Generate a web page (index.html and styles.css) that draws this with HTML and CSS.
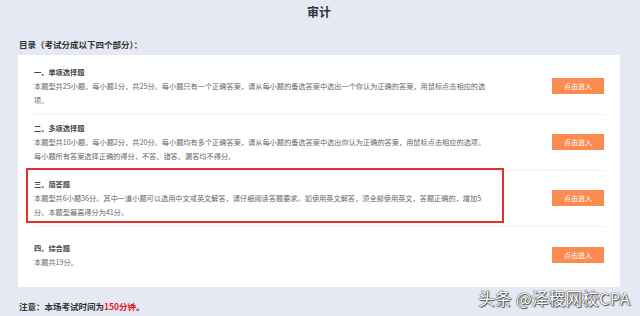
FILE: index.html
```html
<!DOCTYPE html>
<html lang="zh-CN">

<head>
    <meta charset="UTF-8" />
    <meta name="viewport" content="width=device-width, initial-scale=1.0" />
    <title>审计</title>
    <link rel="stylesheet" href="styles.css">
</head>

<body>

    <section class="page">
        <h1 class="title">审计</h1>
        <h2 class="menu">目录（考试分成以下四个部分）：</h2>

        <div class="panel">
            <div class="row">
                <div class="info">
                    <p class="name">一、单项选择题</p>
                    <p class="desc">本题型共25小题，每小题1分，共25分。每小题只有一个正确答案，请从每小题的备选答案中选出一个你认为正确的答案，用鼠标点击相应的选项。</p>
                </div>
                <button class="btn">点击进入</button>
            </div>
            <div class="row">
                <div class="info">
                    <p class="name">二、多项选择题</p>
                    <p class="desc">本题型共10小题，每小题2分，共20分。每小题均有多个正确答案，请从每小题的备选答案中选出你认为正确的答案，用鼠标点击相应的选项。<br>每小题所有答案选择正确的得分，不答、错答、漏答均不得分。</p>
                </div>
                <button class="btn">点击进入</button>
            </div>
            <div class="row">
                <div class="info mark">
                    <p class="name">三、简答题</p>
                    <p class="desc">本题型共6小题36分。其中一道小题可以选用中文或英文解答，请仔细阅读答题要求。如使用英文解答，须全部使用英文，答题正确的，增加5分。本题型最高得分为41分。</p>
                </div>
                <button class="btn">点击进入</button>
            </div>
            <div class="row">
                <div class="info">
                    <p class="name">四、综合题</p>
                    <p class="desc">本题共19分。</p>
                </div>
                <button class="btn">点击进入</button>
            </div>
        </div>

        <p class="note">注意：本场考试时间为<span class="red">150分钟</span>。</p>
    </section>

    <div class="watermark">头条 @泽稷网校CPA</div>

</body>

</html>
```

FILE: styles.css
```css
body {
    margin: 0;
    padding: 0;
    width: 640px;
    height: 316px;
    overflow: hidden;
    position: relative;
    background-color: #e5e9f4;
    font-family: "Noto Sans CJK SC", "Noto Sans", sans-serif;
    color: #333;
}

.page {
    padding: 4px 20px 0 18px;
}

.title {
    margin: 0;
    font-size: 12px;
    line-height: 16px;
    text-align: center;
    font-weight: bold;
}

.menu {
    margin: 17px 0 4px 1px;
    font-size: 8.5px;
    line-height: 14px;
    font-weight: bold;
}

.panel {
    background-color: #fff;
    padding: 4px 16px 4px 16px;
}

.row {
    display: flex;
    align-items: center;
    justify-content: space-between;
    min-height: 56px;
    box-sizing: border-box;
    padding: 6px 0 7px;
    border-bottom: 1px solid #eef0f3;
}

.row:last-child {
    border-bottom: none;
}

.info {
    width: 460px;
}

.info p {
    margin: 0;
    font-size: 7.2px;
    line-height: 14px;
}

.name {
    font-weight: bold;
    color: #444;
}

.desc {
    color: #666;
}

/* 红框标注 */
.mark {
    position: relative;
}

.mark::after {
    content: "";
    position: absolute;
    left: -8px;
    right: -10px;
    top: -9px;
    bottom: -4px;
    border: 2px solid #e0322c;
}

.btn {
    width: 52px;
    height: 16px;
    padding: 0;
    border: none;
    background-color: #fa8c51;
    color: #fff;
    font-family: inherit;
    font-size: 7px;
    cursor: pointer;
}

.note {
    margin: 12px 0 0 1px;
    font-size: 8.5px;
    line-height: 14px;
    font-weight: bold;
}

.red {
    color: #e8161b;
}

.watermark {
    position: absolute;
    right: 10px;
    bottom: 9px;
    font-size: 16.5px;
    line-height: 18px;
    letter-spacing: 0.3px;
    color: #fff;
    text-shadow: 0 0 1px #333, 0 0 1px #333, 1px 1px 1px #555;
}
```
